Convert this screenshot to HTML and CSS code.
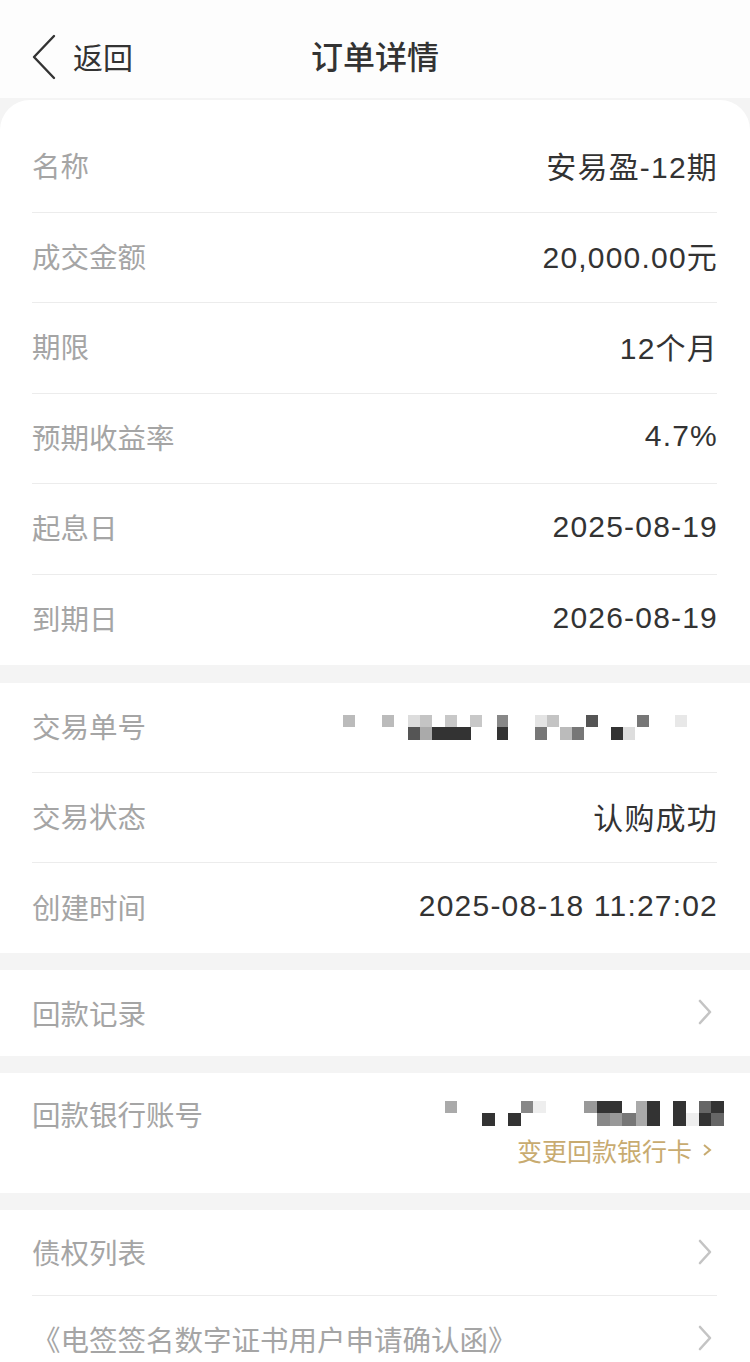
FILE: index.html
```html
<!DOCTYPE html>
<html>
<head>
  <meta charset="utf-8">
  <title>订单详情</title>
  <link rel="stylesheet" href="styles.css">
</head>
<body>
  <div class="header">
    <div class="back">
      <svg class="back-icon" width="26" height="46" viewBox="0 0 26 46">
        <path d="M23 2 L3 23 L23 44" fill="none" stroke="#333" stroke-width="2.4" stroke-linecap="round" stroke-linejoin="round"/>
      </svg>
      <span>返回</span>
    </div>
    <h1>订单详情</h1>
  </div>

  <div class="card card-first">
    <div class="row"><span class="label">名称</span><span class="value">安易盈-12期</span></div>
    <div class="row"><span class="label">成交金额</span><span class="value">20,000.00元</span></div>
    <div class="row"><span class="label">期限</span><span class="value">12个月</span></div>
    <div class="row"><span class="label">预期收益率</span><span class="value">4.7%</span></div>
    <div class="row"><span class="label">起息日</span><span class="value">2025-08-19</span></div>
    <div class="row"><span class="label">到期日</span><span class="value">2026-08-19</span></div>
  </div>

  <div class="card">
    <div class="row row-mid">
      <span class="label">交易单号</span>
      <svg class="mosaic mosaic-order" width="345" height="25" viewBox="343 714 345 25">
        <rect x="343" y="714" width="12" height="12" fill="#bbb"/>
        <rect x="382" y="714" width="12" height="12" fill="#bbb"/>
        <rect x="408" y="714" width="12" height="12" fill="#ddd"/>
        <rect x="420" y="714" width="12" height="12" fill="#c4c4c4"/>
        <rect x="445" y="714" width="12" height="12" fill="#c8c8c8"/>
        <rect x="470" y="714" width="12" height="12" fill="#c8c8c8"/>
        <rect x="497" y="714" width="11" height="12" fill="#888"/>
        <rect x="535" y="714" width="12" height="12" fill="#e4e4e4"/>
        <rect x="547" y="714" width="12" height="12" fill="#c4c4c4"/>
        <rect x="586" y="714" width="12" height="12" fill="#555"/>
        <rect x="637" y="714" width="12" height="12" fill="#777"/>
        <rect x="675" y="714" width="12" height="12" fill="#e8e8e8"/>
        <rect x="408" y="726" width="12" height="13" fill="#555"/>
        <rect x="420" y="726" width="12" height="13" fill="#aaa"/>
        <rect x="432" y="726" width="39" height="13" fill="#333"/>
        <rect x="497" y="726" width="11" height="13" fill="#333"/>
        <rect x="535" y="726" width="12" height="13" fill="#777"/>
        <rect x="560" y="726" width="12" height="13" fill="#bbb"/>
        <rect x="572" y="726" width="12" height="13" fill="#777"/>
        <rect x="611" y="726" width="12" height="13" fill="#333"/>
        <rect x="623" y="726" width="12" height="13" fill="#ddd"/>
      </svg>
    </div>
    <div class="row row-mid"><span class="label">交易状态</span><span class="value">认购成功</span></div>
    <div class="row row-mid"><span class="label">创建时间</span><span class="value">2025-08-18 11:27:02</span></div>
  </div>

  <div class="card">
    <div class="row row-link">
      <span class="label">回款记录</span>
      <svg class="arrow" width="14" height="26" viewBox="0 0 14 26"><path d="M2 2 L12 13 L2 24" fill="none" stroke="#c4c4c4" stroke-width="2.6" stroke-linecap="round" stroke-linejoin="round"/></svg>
    </div>
  </div>

  <div class="card">
    <div class="account">
      <div class="account-top">
        <span class="label">回款银行账号</span>
        <svg class="mosaic" width="280" height="25" viewBox="446 1109 280 25">
          <rect x="446" y="1109" width="12" height="12" fill="#aaa"/>
          <rect x="522" y="1109" width="12" height="12" fill="#888"/>
          <rect x="534" y="1109" width="13" height="12" fill="#eee"/>
          <rect x="585" y="1109" width="13" height="12" fill="#999"/>
          <rect x="598" y="1109" width="25" height="12" fill="#333"/>
          <rect x="637" y="1109" width="11" height="12" fill="#aaa"/>
          <rect x="648" y="1109" width="13" height="12" fill="#333"/>
          <rect x="674" y="1109" width="13" height="12" fill="#333"/>
          <rect x="700" y="1109" width="12" height="12" fill="#666"/>
          <rect x="712" y="1109" width="13" height="12" fill="#333"/>
          <rect x="483" y="1121" width="13" height="13" fill="#333"/>
          <rect x="509" y="1121" width="13" height="13" fill="#333"/>
          <rect x="598" y="1121" width="13" height="13" fill="#888"/>
          <rect x="611" y="1121" width="12" height="13" fill="#999"/>
          <rect x="623" y="1121" width="14" height="13" fill="#777"/>
          <rect x="637" y="1121" width="11" height="13" fill="#aaa"/>
          <rect x="648" y="1121" width="13" height="13" fill="#333"/>
          <rect x="674" y="1121" width="13" height="13" fill="#333"/>
          <rect x="687" y="1121" width="13" height="13" fill="#eee"/>
          <rect x="700" y="1121" width="12" height="13" fill="#333"/>
          <rect x="712" y="1121" width="13" height="13" fill="#666"/>
        </svg>
      </div>
      <div class="change">
        <span>变更回款银行卡</span>
        <svg class="arrow-gold" width="10" height="14" viewBox="0 0 10 14"><path d="M2 2 L8 7 L2 12" fill="none" stroke="#c8ab70" stroke-width="2"/></svg>
      </div>
    </div>
  </div>

  <div class="card">
    <div class="row row-link">
      <span class="label">债权列表</span>
      <svg class="arrow" width="14" height="26" viewBox="0 0 14 26"><path d="M2 2 L12 13 L2 24" fill="none" stroke="#c4c4c4" stroke-width="2.6" stroke-linecap="round" stroke-linejoin="round"/></svg>
    </div>
    <div class="row row-link">
      <span class="label">《电签签名数字证书用户申请确认函》</span>
      <svg class="arrow" width="14" height="26" viewBox="0 0 14 26"><path d="M2 2 L12 13 L2 24" fill="none" stroke="#c4c4c4" stroke-width="2.6" stroke-linecap="round" stroke-linejoin="round"/></svg>
    </div>
  </div>
</body>
</html>
```

FILE: styles.css
```css
body {
  margin: 0;
  background-color: #f4f4f4;
  font-family: "Noto Sans CJK SC", "Noto Sans", sans-serif;
  color: #333;
  overflow: hidden;
}
.header {
  height: 98px;
  background-color: #fdfdfd;
  display: flex;
  align-items: center;
  justify-content: center;
  position: relative;
}
.back {
  position: absolute;
  left: 31px;
  top: 34px;
  display: flex;
  align-items: center;
  gap: 16px;
  font-size: 30px;
  color: #333;
}
.back span {
  margin-top: -2px;
}
.header h1 {
  margin: 0;
  font-size: 32px;
  font-weight: 500;
  color: #333;
  padding-top: 12px;
}
.card {
  background-color: #fff;
  margin-bottom: 17px;
}
.card-first {
  margin-top: 2px;
  margin-bottom: 18px;
  padding-top: 22px;
  border-radius: 30px 30px 0 0;
}
.row {
  box-sizing: border-box;
  height: 90.5px;
  margin: 0 33px 0 32px;
  padding-bottom: 4px;
  display: flex;
  align-items: center;
  justify-content: space-between;
  border-bottom: 1px solid #ececec;
}
.row:last-child {
  border-bottom: none;
}
.row-mid {
  height: 90px;
}
.label {
  font-size: 28.5px;
  color: #a5a5a5;
}
.value {
  font-family: "Liberation Sans", "Noto Sans CJK SC", sans-serif;
  font-size: 30px;
  letter-spacing: 1.2px;
  margin-right: -1px;
  color: #333;
}
.mosaic-order {
  margin-right: 29px;
  margin-top: 4px;
}
.row-link {
  height: 86px;
  padding-bottom: 2px;
}
.arrow {
  margin-right: 5px;
}
.account {
  height: 120px;
  margin: 0 25px 0 32px;
  display: flex;
  flex-direction: column;
}
.account-top {
  display: flex;
  justify-content: space-between;
  align-items: center;
  margin-top: 20px;
}
.change {
  align-self: flex-end;
  display: flex;
  align-items: center;
  gap: 10px;
  margin-right: 13px;
  margin-top: -2px;
  font-size: 25px;
  color: #c8ab70;
}
```
